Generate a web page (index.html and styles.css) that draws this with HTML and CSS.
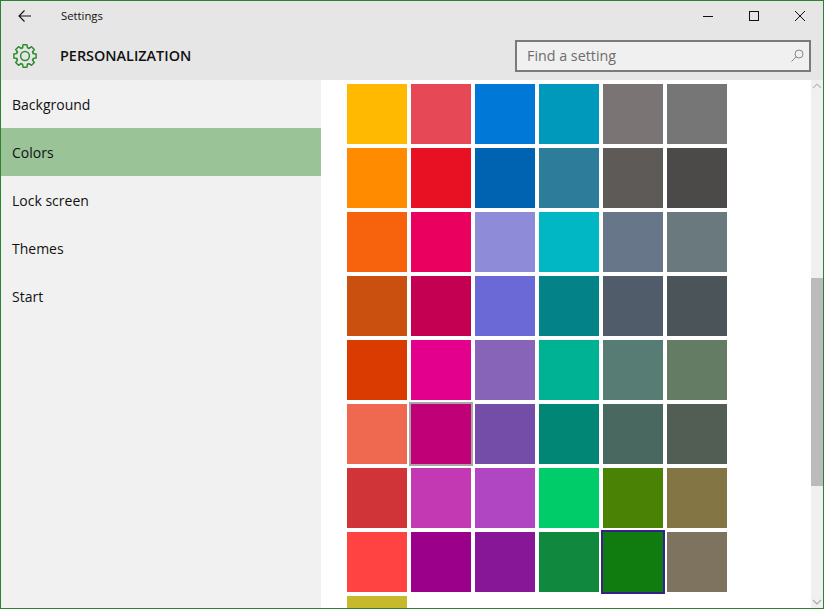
FILE: index.html
```html
<!DOCTYPE html>
<html lang="en">
<head>
    <meta charset="UTF-8">
    <title>Settings</title>
    <link rel="stylesheet" href="styles.css">
</head>
<body>
    <div class="window">
        <div class="titlebar">
            <svg class="back" width="14" height="12" viewBox="0 0 14 12"><path d="M13 6H1M6.5.5L1 6l5.5 5.5" fill="none" stroke="#111" stroke-width="1.1"/></svg>
            <span class="app-name">Settings</span>
            <div class="win-buttons">
                <svg width="12" height="12" viewBox="0 0 12 12"><path d="M1 6.5h10" stroke="#111" stroke-width="1"/></svg>
                <svg width="12" height="12" viewBox="0 0 12 12"><rect x="1.5" y="1.5" width="9" height="9" fill="none" stroke="#111" stroke-width="1"/></svg>
                <svg width="12" height="12" viewBox="0 0 12 12"><path d="M1 1l10 10M11 1L1 11" stroke="#111" stroke-width="1"/></svg>
            </div>
        </div>
        <div class="pagebar">
            <svg class="gear" width="24" height="24" viewBox="0 0 24 24">
                <defs>
                    <path id="tooth" d="M8.22-2.51L11.13-1.96V1.96L8.22 2.51A8.6 8.6 0 0 1 7.59 4.04"/>
                </defs>
                <g transform="translate(12 12)" fill="none" stroke="#2f8b2f" stroke-width="1.5" stroke-linejoin="round" stroke-linecap="round">
                    <use href="#tooth"/>
                    <use href="#tooth" transform="rotate(45)"/>
                    <use href="#tooth" transform="rotate(90)"/>
                    <use href="#tooth" transform="rotate(135)"/>
                    <use href="#tooth" transform="rotate(180)"/>
                    <use href="#tooth" transform="rotate(225)"/>
                    <use href="#tooth" transform="rotate(270)"/>
                    <use href="#tooth" transform="rotate(315)"/>
                    <circle r="4.4"/>
                </g>
            </svg>
            <span class="page-name">PERSONALIZATION</span>
            <div class="search">
                <span>Find a setting</span>
                <svg width="13" height="13" viewBox="0 0 13 13"><circle cx="8" cy="5" r="4" fill="none" stroke="#888" stroke-width="1"/><path d="M5.2 7.8L.5 12.5" stroke="#888" stroke-width="1"/></svg>
            </div>
        </div>
        <div class="body-row">
            <nav class="sidebar">
                <div class="nav-item">Background</div>
                <div class="nav-item active">Colors</div>
                <div class="nav-item">Lock screen</div>
                <div class="nav-item">Themes</div>
                <div class="nav-item">Start</div>
            </nav>
            <main class="content">
                <div class="swatches">
                    <div class="swatch c-ffb900"></div><div class="swatch c-e74856"></div><div class="swatch c-0078d7"></div><div class="swatch c-0099bc"></div><div class="swatch c-7a7574"></div><div class="swatch c-767676"></div>
                    <div class="swatch c-ff8c00"></div><div class="swatch c-e81123"></div><div class="swatch c-0063b1"></div><div class="swatch c-2d7d9a"></div><div class="swatch c-5d5a58"></div><div class="swatch c-4c4a48"></div>
                    <div class="swatch c-f7630c"></div><div class="swatch c-ea005e"></div><div class="swatch c-8e8cd8"></div><div class="swatch c-00b7c3"></div><div class="swatch c-68768a"></div><div class="swatch c-69797e"></div>
                    <div class="swatch c-ca5010"></div><div class="swatch c-c30052"></div><div class="swatch c-6b69d6"></div><div class="swatch c-038387"></div><div class="swatch c-515c6b"></div><div class="swatch c-4a5459"></div>
                    <div class="swatch c-da3b01"></div><div class="swatch c-e3008c"></div><div class="swatch c-8764b8"></div><div class="swatch c-00b294"></div><div class="swatch c-567c73"></div><div class="swatch c-647c64"></div>
                    <div class="swatch c-ef6950"></div><div class="swatch c-bf0077 hovered"></div><div class="swatch c-744da9"></div><div class="swatch c-018574"></div><div class="swatch c-486860"></div><div class="swatch c-525e54"></div>
                    <div class="swatch c-d13438"></div><div class="swatch c-c239b3"></div><div class="swatch c-b146c2"></div><div class="swatch c-00cc6a"></div><div class="swatch c-498205"></div><div class="swatch c-847545"></div>
                    <div class="swatch c-ff4343"></div><div class="swatch c-9a0089"></div><div class="swatch c-881798"></div><div class="swatch c-10893e"></div><div class="swatch c-107c10 selected"></div><div class="swatch c-7e735f"></div>
                    <div class="swatch c-c7b92c"></div>
                </div>
            </main>
            <div class="scrollbar">
                <svg width="12" height="12" viewBox="0 0 12 12"><path d="M2 8l4-4 4 4" fill="none" stroke="#bbb" stroke-width="1.2"/></svg>
                <div class="track"><div class="thumb"></div></div>
                <svg width="12" height="12" viewBox="0 0 12 12"><path d="M2 4l4 4 4-4" fill="none" stroke="#aaa" stroke-width="1.2"/></svg>
            </div>
        </div>
    </div>
</body>
</html>
```
FILE: styles.css
```css
html, body {
    margin: 0;
    padding: 0;
}
body {
    font-family: "Open Sans", "Liberation Sans", sans-serif;
    color: #111;
}
.window {
    box-sizing: border-box;
    width: 824px;
    height: 609px;
    border: 1px solid #2f8132;
    display: flex;
    flex-direction: column;
    overflow: hidden;
    background: #fff;
}
.titlebar {
    height: 30px;
    background: #e6e6e6;
    display: flex;
    align-items: center;
    flex-shrink: 0;
}
.back {
    margin-left: 17px;
}
.app-name {
    margin-left: 29px;
    margin-bottom: 2px;
    font-size: 11.3px;
}
.win-buttons {
    margin-left: auto;
    margin-right: 17px;
    display: flex;
    gap: 34px;
}
.pagebar {
    height: 49px;
    background: #e6e6e6;
    display: flex;
    align-items: center;
    flex-shrink: 0;
}
.gear {
    margin-left: 12px;
    margin-top: 1px;
}
.page-name {
    margin-left: 23px;
    font-size: 14.4px;
    font-weight: 600;
}
.search {
    box-sizing: border-box;
    width: 296px;
    height: 32px;
    margin-left: auto;
    margin-right: 12px;
    margin-top: 1px;
    padding: 0 5px 2px 10px;
    border: 2px solid #7a7a7a;
    background: #f0f0f0;
    display: flex;
    align-items: center;
    justify-content: space-between;
    font-size: 14.3px;
    color: #6d6d6d;
}
.body-row {
    flex: 1;
    display: flex;
    min-height: 0;
}
.sidebar {
    width: 320px;
    background: #f2f1f2;
    flex-shrink: 0;
}
.nav-item {
    height: 48px;
    line-height: 50px;
    padding-left: 11px;
    font-size: 14px;
}
.nav-item.active {
    background: #9ac497;
}
.content {
    flex: 1;
    overflow: hidden;
    padding: 4px 0 0 26px;
}
.swatches {
    display: grid;
    grid-template-columns: repeat(6, 60px);
    grid-auto-rows: 60px;
    gap: 4px;
}
.swatch.hovered {
    outline: 2px solid #a9a6a9;
}
.swatch.selected {
    outline: 2px solid #38218a;
}
.scrollbar {
    width: 12px;
    background: #f0f0f0;
    display: flex;
    flex-direction: column;
    flex-shrink: 0;
}
.track {
    flex: 1;
}
.thumb {
    height: 208px;
    margin-top: 186px;
    background: #bbb;
}
.c-ffb900 { background: #ffb900; }
.c-e74856 { background: #e74856; }
.c-0078d7 { background: #0078d7; }
.c-0099bc { background: #0099bc; }
.c-7a7574 { background: #7a7574; }
.c-767676 { background: #767676; }
.c-ff8c00 { background: #ff8c00; }
.c-e81123 { background: #e81123; }
.c-0063b1 { background: #0063b1; }
.c-2d7d9a { background: #2d7d9a; }
.c-5d5a58 { background: #5d5a58; }
.c-4c4a48 { background: #4c4a48; }
.c-f7630c { background: #f7630c; }
.c-ea005e { background: #ea005e; }
.c-8e8cd8 { background: #8e8cd8; }
.c-00b7c3 { background: #00b7c3; }
.c-68768a { background: #68768a; }
.c-69797e { background: #69797e; }
.c-ca5010 { background: #ca5010; }
.c-c30052 { background: #c30052; }
.c-6b69d6 { background: #6b69d6; }
.c-038387 { background: #038387; }
.c-515c6b { background: #515c6b; }
.c-4a5459 { background: #4a5459; }
.c-da3b01 { background: #da3b01; }
.c-e3008c { background: #e3008c; }
.c-8764b8 { background: #8764b8; }
.c-00b294 { background: #00b294; }
.c-567c73 { background: #567c73; }
.c-647c64 { background: #647c64; }
.c-ef6950 { background: #ef6950; }
.c-bf0077 { background: #bf0077; }
.c-744da9 { background: #744da9; }
.c-018574 { background: #018574; }
.c-486860 { background: #486860; }
.c-525e54 { background: #525e54; }
.c-d13438 { background: #d13438; }
.c-c239b3 { background: #c239b3; }
.c-b146c2 { background: #b146c2; }
.c-00cc6a { background: #00cc6a; }
.c-498205 { background: #498205; }
.c-847545 { background: #847545; }
.c-ff4343 { background: #ff4343; }
.c-9a0089 { background: #9a0089; }
.c-881798 { background: #881798; }
.c-10893e { background: #10893e; }
.c-107c10 { background: #107c10; }
.c-7e735f { background: #7e735f; }
.c-c7b92c { background: #c7b92c; }
```
